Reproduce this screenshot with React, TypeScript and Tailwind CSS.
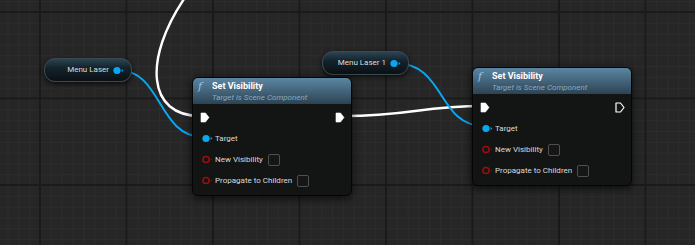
import React from 'react';

type PinKind = 'exec' | 'object' | 'bool';

const ExecPin: React.FC<{ hollow?: boolean }> = ({ hollow }) => (
  <svg width="10" height="11" viewBox="0 0 10 11" className="shrink-0">
    <path
      d="M1 1 H5.5 L9 5.5 L5.5 10 H1 Z"
      fill={hollow ? 'none' : '#ffffff'}
      stroke="#ffffff"
      strokeWidth={hollow ? 1.2 : 0.6}
      strokeLinejoin="round"
    />
  </svg>
);

const DataPin: React.FC<{ kind: PinKind }> = ({ kind }) =>
  kind === 'object' ? (
    <svg width="11" height="9" viewBox="0 0 11 9" className="shrink-0">
      <circle cx="4" cy="4.5" r="3.6" fill="#0aa6f2" />
      <path d="M8.6 3 L10.4 4.5 L8.6 6 Z" fill="#0aa6f2" />
    </svg>
  ) : (
    <svg width="11" height="9" viewBox="0 0 11 9" className="shrink-0">
      <circle cx="4" cy="4.5" r="3.1" fill="none" stroke="#9c0e0e" strokeWidth="1.5" />
      <path d="M8.6 3 L10.4 4.5 L8.6 6 Z" fill="#6e0b0b" />
    </svg>
  );

const Checkbox = () => (
  <div className="ml-[5px] h-[12px] w-[12px] rounded-[2px] border border-[#4f4f4f] bg-[#161616]" />
);

const GetterNode: React.FC<{ label: string; className: string }> = ({ label, className }) => (
  <div
    className={`absolute flex h-[24px] items-center justify-end rounded-[11px] border border-[#3c4952] bg-[linear-gradient(180deg,#2c4452_0%,#13232c_40%,#0b1014_100%)] pr-[7px] shadow-[0_2px_5px_rgba(0,0,0,0.7)] ${className}`}
  >
    <span className="mr-[4px] text-[8px] text-[#dcdcdc]">{label}</span>
    <DataPin kind="object" />
  </div>
);

const Row: React.FC<{ children: React.ReactNode }> = ({ children }) => (
  <div className="flex h-[21px] items-center">{children}</div>
);

const SetVisibilityNode: React.FC<{ className: string; outLinked?: boolean }> = ({ className, outLinked }) => (
  <div
    className={`absolute w-[160px] overflow-hidden rounded-[6px] border border-[#050505] bg-[#131515] shadow-[0_2px_8px_rgba(0,0,0,0.75)] ${className}`}
  >
    <div className="flex h-[26px] bg-[linear-gradient(180deg,#5a86a3_0%,#46687f_45%,#2c4354_100%)] pl-[5px] pt-[3px]">
      <span className="w-[14px] font-['DejaVu_Serif',serif] text-[11px] italic leading-[12px] text-[#8fc8ee]">f</span>
      <div className="flex flex-col">
        <span className="text-[9px] font-bold leading-[11px] text-white">Set Visibility</span>
        <span className="text-[8px] italic leading-[11px] text-[#8aa8bb]">Target is Scene Component</span>
      </div>
    </div>
    <div className="flex flex-col pb-[4px] pt-[3px]">
      <Row>
        <div className="ml-[7px]">
          <ExecPin />
        </div>
        <div className="ml-auto mr-[6px]">
          <ExecPin hollow={!outLinked} />
        </div>
      </Row>
      <Row>
        <div className="ml-[9px]">
          <DataPin kind="object" />
        </div>
        <span className="ml-[2px] text-[8px] text-[#dadada]">Target</span>
      </Row>
      <Row>
        <div className="ml-[9px]">
          <DataPin kind="bool" />
        </div>
        <span className="ml-[2px] text-[8px] text-[#dadada]">New Visibility</span>
        <Checkbox />
      </Row>
      <Row>
        <div className="ml-[9px]">
          <DataPin kind="bool" />
        </div>
        <span className="ml-[2px] text-[8px] text-[#dadada]">Propagate to Children</span>
        <Checkbox />
      </Row>
    </div>
  </div>
);

export default function App() {
  return (
    <div className="relative h-[245px] w-[695px] overflow-hidden bg-[#262626] font-['Roboto',sans-serif]">
      {/* grid */}
      <svg className="absolute inset-0" width="695" height="245">
        <defs>
          <pattern id="minor" x="40" y="12" width="10.8125" height="10.8125" patternUnits="userSpaceOnUse">
            <rect x="0" y="0" width="1" height="10.8125" fill="#2c2c2c" />
            <rect x="0" y="0" width="10.8125" height="1" fill="#2c2c2c" />
          </pattern>
          <pattern id="major" x="39" y="11" width="86.5" height="86.5" patternUnits="userSpaceOnUse">
            <rect x="0" y="0" width="2" height="86.5" fill="#1a1a1a" />
            <rect x="0" y="0" width="86.5" height="2" fill="#1a1a1a" />
          </pattern>
        </defs>
        <rect width="695" height="245" fill="url(#minor)" />
        <rect width="695" height="245" fill="url(#major)" />
      </svg>

      {/* wires */}
      <svg className="absolute inset-0" width="695" height="245" fill="none">
        <path d="M186 -4 C142 60, 148 116, 200 116" stroke="#ffffff" strokeWidth="2.4" />
        <path d="M118 70 C162 70, 158 137, 203 137" stroke="#0aa6f2" strokeWidth="2" />
        <path d="M344 116 C410 116, 420 106, 484 106" stroke="#ffffff" strokeWidth="2.4" />
        <path d="M395 63 C445 63, 438 126, 483 126" stroke="#0aa6f2" strokeWidth="2" />
      </svg>

      <GetterNode label="Menu Laser" className="left-[44px] top-[58px] w-[88px]" />
      <GetterNode label="Menu Laser 1" className="left-[322px] top-[51px] w-[87px]" />

      <SetVisibilityNode className="left-[192px] top-[77px]" outLinked />
      <SetVisibilityNode className="left-[472px] top-[67px]" />
    </div>
  );
}
